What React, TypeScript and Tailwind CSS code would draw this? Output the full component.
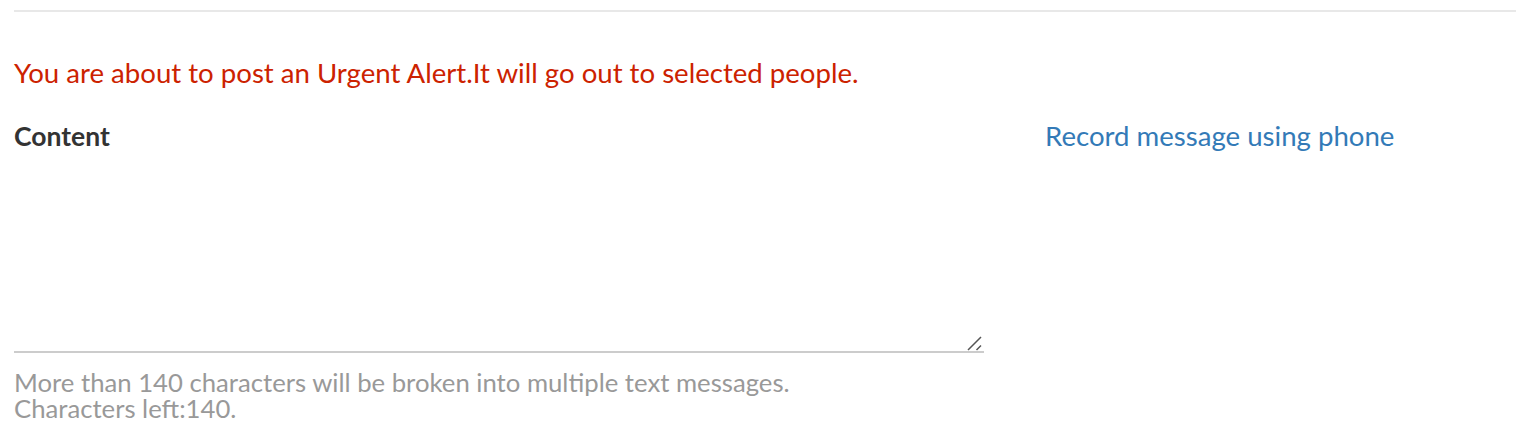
import React from "react";

export default function App() {
  return (
    <div className="w-[1516px] h-[446px] bg-white font-['Lato','Open_Sans',sans-serif] overflow-hidden">
      <div className="ml-[14px] mt-[10px] h-[2px] bg-[#e8e8e8]" />
      <p className="mt-[45px] ml-[14px] text-[27.6px] leading-[32px] text-[#cc2200]">
        You are about to post an Urgent Alert.It will go out to selected people.
      </p>
      <div className="mt-[32px] ml-[14px] flex">
        <div className="w-[970px]">
          <label className="block text-[26.5px] leading-[30px] font-bold text-[#333]">Content</label>
          <div className="relative mt-[10px]">
            <textarea className="block w-[970px] h-[192px] border-0 border-b-2 border-[#cccccc] outline-none resize-none" />
            <svg className="absolute right-[1px] bottom-[2px] w-[16px] h-[16px]" viewBox="0 0 16 16">
              <path d="M1 15 L14 2 M9.5 15 L14 10.5" stroke="#555" strokeWidth="1.5" fill="none" />
            </svg>
          </div>
          <div className="mt-[16px] text-[25.7px] leading-[26px] text-[#999]">
            <div>More than 140 characters will be broken into multiple text messages.</div>
            <div>Characters left:140.</div>
          </div>
        </div>
        <a href="#" className="ml-[61px] text-[27.6px] leading-[30px] text-[#337ab7]">
          Record message using phone
        </a>
      </div>
    </div>
  );
}
